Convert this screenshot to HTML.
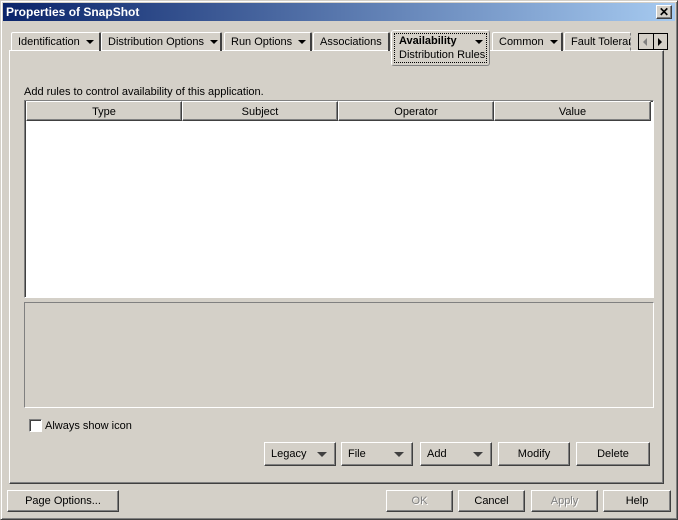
<html><head><style>
body{margin:0;width:678px;height:520px;background:#d4d0c8;font-family:"Liberation Sans",sans-serif;font-size:11px;position:relative;overflow:hidden}
.a{position:absolute}
.win{left:0;top:0;width:676px;height:518px;border:1px solid;border-color:#d4d0c8 #404040 #404040 #d4d0c8;box-shadow:inset 1px 1px #fff,inset -1px -1px #808080}
.title{left:3px;top:3px;width:672px;height:18px;background:linear-gradient(90deg,#0a246a,#a6caf0);color:#fff;font-weight:bold;font-size:12px;line-height:18px;text-indent:3px}
.btn{background:#d4d0c8;border:1px solid;border-color:#fff #404040 #404040 #fff;box-shadow:inset -1px -1px #808080;box-sizing:border-box;text-align:center;line-height:21px;color:#000}
.tab{top:32px;height:19px;border-top:1px solid #fff;border-left:1px solid #fff;border-right:2px solid #404040;box-sizing:border-box;line-height:19px;padding-left:6px;border-radius:2px 2px 0 0;white-space:nowrap}
.arr{display:inline-block;width:0;height:0;border-left:4px solid transparent;border-right:4px solid transparent;border-top:4px solid #000;vertical-align:middle;margin-left:6px}
.col{top:101px;height:20px;line-height:21px;text-align:center}
.dd{text-align:left;padding-left:6px}
.dd i{position:absolute;right:8px;top:9px;border-left:5px solid transparent;border-right:5px solid transparent;border-top:5px solid #404040;width:0;height:0}
</style></head><body>
<div class="a win"></div>
<div class="a title">Properties of SnapShot</div>
<div class="a btn" style="left:656px;top:5px;width:16px;height:14px;line-height:12px;font-weight:bold;font-size:12px">✕</div>
<div class="a" style="left:9px;top:50px;width:655px;height:434px;border:1px solid;border-color:#fff #404040 #404040 #fff;box-sizing:border-box;box-shadow:inset -1px -1px #808080"></div>
<div class="a tab" style="left:11px;width:90px">Identification<span class="arr"></span></div>
<div class="a tab" style="left:101px;width:121px">Distribution Options<span class="arr"></span></div>
<div class="a tab" style="left:224px;width:88px">Run Options<span class="arr"></span></div>
<div class="a tab" style="left:313px;width:77px">Associations</div>
<div class="a tab" style="left:492px;width:71px">Common<span class="arr"></span></div>
<div class="a tab" style="left:564px;width:67px;border-right:1px dashed #808080;overflow:hidden">Fault Tolerar</div>
<div class="a" style="left:391px;top:30px;width:99px;height:36px;background:#d4d0c8;border:1px solid;border-color:#fff #808080 #808080 #fff;box-sizing:border-box;border-radius:3px"></div>
<div class="a" style="left:394px;top:33px;width:93px;height:30px;border:1px dotted #000;box-sizing:border-box;padding-left:4px;line-height:14px;white-space:nowrap"><b>Availability</b><br>Distribution Rules</div>
<div class="a" style="left:475px;top:40px;border-left:4px solid transparent;border-right:4px solid transparent;border-top:4px solid #000"></div>
<div class="a" style="left:638px;top:33px;width:30px;height:17px;border:1px solid #000;box-sizing:border-box;background:#d4d0c8"></div>
<div class="a" style="left:653px;top:33px;width:1px;height:17px;background:#000"></div>
<div class="a" style="left:643px;top:38px;border-right:4px solid #808080;border-top:4px solid transparent;border-bottom:4px solid transparent"></div>
<div class="a" style="left:658px;top:38px;border-left:4px solid #000;border-top:4px solid transparent;border-bottom:4px solid transparent"></div>
<div class="a" style="left:24px;top:86px">Add rules to control availability of this application.</div>
<div class="a" style="left:24px;top:100px;width:630px;height:198px;background:#fff;border:1px solid;border-color:#808080 #fff #fff #808080;box-sizing:border-box;box-shadow:inset 1px 1px #404040"></div>
<div class="a btn col" style="left:26px;width:156px">Type</div>
<div class="a btn col" style="left:182px;width:156px">Subject</div>
<div class="a btn col" style="left:338px;width:156px">Operator</div>
<div class="a btn col" style="left:494px;width:157px">Value</div>
<div class="a" style="left:24px;top:302px;width:630px;height:106px;border:1px solid;border-color:#808080 #fff #fff #808080;box-sizing:border-box"></div>
<div class="a" style="left:29px;top:419px;width:13px;height:13px;background:#fff;border:1px solid;border-color:#808080 #fff #fff #808080;box-sizing:border-box;box-shadow:inset 1px 1px #404040"></div>
<div class="a" style="left:45px;top:420px">Always show icon</div>
<div class="a btn dd" style="left:264px;top:442px;width:72px;height:24px;line-height:23px">Legacy<i></i></div>
<div class="a btn dd" style="left:341px;top:442px;width:72px;height:24px;line-height:23px">File<i></i></div>
<div class="a btn dd" style="left:420px;top:442px;width:72px;height:24px;line-height:23px">Add<i></i></div>
<div class="a btn" style="left:498px;top:442px;width:72px;height:24px;line-height:23px">Modify</div>
<div class="a btn" style="left:576px;top:442px;width:74px;height:24px;line-height:23px">Delete</div>
<div class="a btn" style="left:7px;top:490px;width:112px;height:22px">Page Options...</div>
<div class="a btn" style="left:386px;top:490px;width:67px;height:22px;color:#808080;text-shadow:1px 1px #fff">OK</div>
<div class="a btn" style="left:458px;top:490px;width:67px;height:22px">Cancel</div>
<div class="a btn" style="left:531px;top:490px;width:67px;height:22px;color:#808080;text-shadow:1px 1px #fff">Apply</div>
<div class="a btn" style="left:603px;top:490px;width:68px;height:22px">Help</div>
</body></html>
